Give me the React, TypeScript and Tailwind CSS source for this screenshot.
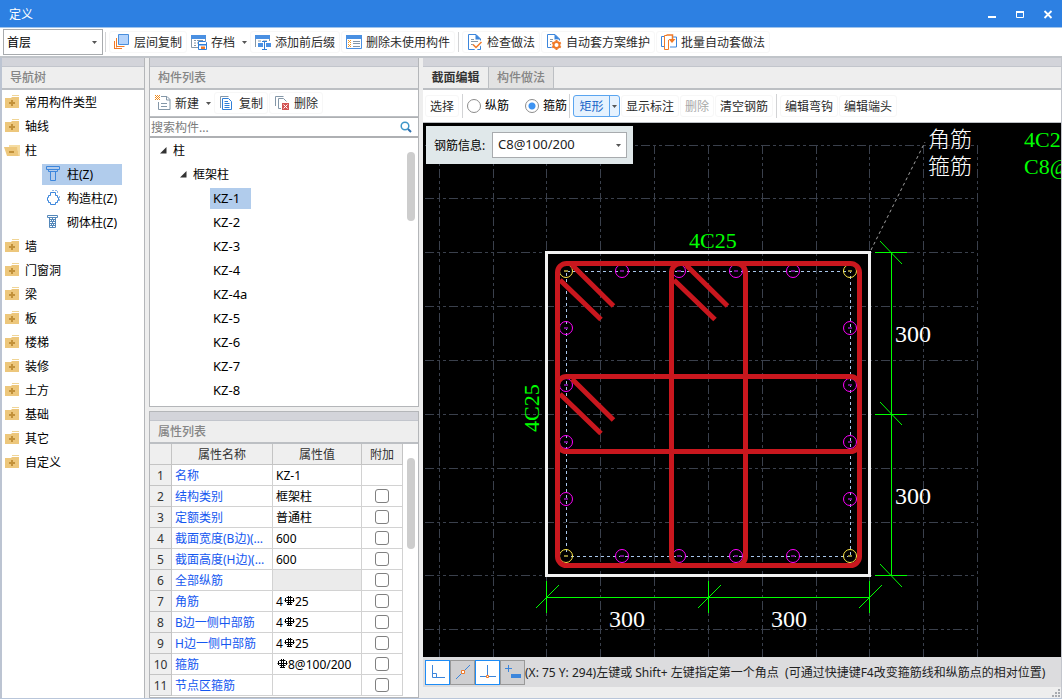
import { ReactNode } from "react";
import clsx from "clsx";

const SANS = "font-['Noto_Sans','Noto_Sans_CJK_SC',sans-serif]";

type IconProps = { children: ReactNode; className?: string };

function Icon({ children, className }: IconProps) {
  return (
    <svg width="16" height="16" viewBox="0 0 16 16" fill="none" aria-hidden="true" className={clsx("shrink-0", className)}>
      {children}
    </svg>
  );
}

function Caret({ className }: { className?: string }) {
  return (
    <svg width="5" height="3" viewBox="0 0 5 3" aria-hidden="true" className={clsx("shrink-0", className)}>
      <path d="M0 0h5L2.5 3z" fill="#555" />
    </svg>
  );
}

/* ---------- icons ---------- */

const CopyLayerIcon = () => (
  <Icon>
    <path d="M4.500.5h10v10h-10z" fill="#b4d3fb" stroke="#4a8fdc" />
    <path d="M2.500 4v9.500" stroke="#f07a28" />
    <path d="M2.500 12.500h8" stroke="#f07a28" />
    <path d="M.5 7v8" stroke="#f07a28" />
    <path d="M0 14.500h8" stroke="#f07a28" />
  </Icon>
);

const ArchiveIcon = () => (
  <Icon>
    <path d="M.5 1v12.500H7M14.500 5v2" stroke="#8497a8" />
    <path d="M0 1h15v4H0z" fill="#4a90e2" />
    <path d="M3 6.500h2M6 6.500h6M3 9h2M6 9h2M3 11.500h2" stroke="#8497a8" />
    <path d="M7.500 7.500h7l1 1v7h-8z" fill="#fff" stroke="#2f7fd8" />
    <path d="M8 10h7v1.500H8z" fill="#2f7fd8" />
    <path d="M10 12.500h4V15h-4z" fill="#f07a28" />
  </Icon>
);

const PrefixIcon = () => (
  <Icon>
    <path d="M.5 1v12M14.500 1v6" stroke="#8497a8" />
    <path d="M0 1h15v4H0z" fill="#4a90e2" />
    <path d="M3 7h3M8 7h4M3 9.500h2" stroke="#8497a8" />
    <path d="M3 9h5v4H3zM11 9h5v4h-5z" fill="#4a90e2" />
    <path d="M7 7.500h5M9.500 7.500v8M7 15.500h5" stroke="#2f7fd8" />
  </Icon>
);

const UnusedIcon = () => (
  <Icon>
    <path d="M.5 2.500h15v12H.5z" stroke="#4a90e2" fill="#fff" />
    <path d="M0 1h16v4H0z" fill="#4a90e2" />
    <path d="M7 7.500h7M7 9.500h7M7 12.500h7" stroke="#8497a8" />
    <path d="M2 6h1v1H2zM4 6h1v1H4zM3 7h1v1H3zM2 8h1v1H2zM4 8h1v1H4zM2 10h1v1H2zM4 10h1v1H4zM3 11h1v1H3zM2 12h1v1H2zM4 12h1v1H4z" fill="#f39a28" />
  </Icon>
);

const CheckDocIcon = () => (
  <Icon>
    <path d="M9 .5H1.500v15h12V5z" fill="#fff" stroke="#3c86dc" />
    <path d="M8.500 0 14 5.500H8.500z" fill="#3c86dc" />
    <path d="M4 5.500h3M4 7.500h7M4 10.500h3" stroke="#8497a8" />
    <path d="M6 10.500 9 14l6-6.500" stroke="#fff" strokeWidth="4" />
    <path d="m6 10.500 3 3 5.500-5.500" stroke="#f07a28" strokeWidth="1.500" />
  </Icon>
);

const GearDocIcon = () => (
  <Icon>
    <path d="M9 .5H1.500v13h12V5z" fill="#fff" stroke="#3c86dc" />
    <path d="M8.500 0 14 5.500H8.500z" fill="#3c86dc" />
    <path d="M4 5.500h3M4 7.500h4M4 10.500h3" stroke="#8497a8" />
    <circle cx="10.500" cy="11" r="5.500" fill="#fff" />
    <circle cx="10.500" cy="11" r="3" stroke="#f07a28" strokeWidth="2" />
    <path d="M10.500 6v1.500M10.500 14.500V16M6.200 8.500l1.400.8M13.400 12.700l1.400.8M6.200 13.500l1.400-.8M13.400 9.300l1.400-.8" stroke="#f07a28" strokeWidth="2" />
  </Icon>
);

const BatchIcon = () => (
  <Icon>
    <path d="M3 2.500H.5v10H3M12 3h3.500v10H9" stroke="#3c86dc" />
    <path d="M6 1.500H3.500v14H7.500V6" stroke="#f07a28" />
    <path d="M5.500 1h6v5" stroke="#f07a28" strokeWidth="1.500" />
    <path d="M7.500 5h7L11 9z" fill="#f07a28" />
  </Icon>
);

const NewIcon = () => (
  <Icon>
    <path d="M6 1.500h6l3 3v10H3.500V7" stroke="#8497a8" />
    <path d="M11.500 1.500V5H15M6 8.500h6M6 11.500h6" stroke="#8497a8" />
    <path d="M0 0h1v1H0zM2 0h1v1H2zM4 0h1v1H4zM1 1h1v1H1zM3 1h1v1H3zM0 2h1v1H0zM2 2h1v1H2zM4 2h1v1H4zM1 3h1v1H1zM3 3h1v1H3zM0 4h1v1H0zM2 4h1v1H2zM4 4h1v1H4z" fill="#f08a1c" />
  </Icon>
);

const CopyIcon = () => (
  <Icon>
    <path d="M1.500 13V1.500h8" stroke="#8497a8" />
    <path d="M3.500 3.500h6l3 3v8h-9z" stroke="#2f7fd8" />
    <path d="M5.500 6.500H9M5.500 8.500h5M5.500 10.500h5M5.500 12.500h5" stroke="#2f7fd8" />
  </Icon>
);

const DeleteIcon = () => (
  <Icon>
    <path d="M1.500 11V1.500h8M7 13.500H4.500v-10h5l3 3" stroke="#8497a8" />
    <path d="M8 8h7v7H8z" fill="#d35454" />
    <path d="m9.500 9.500 4 4m0-4-4 4" stroke="#fff" />
  </Icon>
);

const FolderIcon = () => (
  <Icon>
    <path d="M8 1h7v1H8z" fill="#f0d596" />
    <path d="M1 4h6l1-1h7v11H1z" fill="#edc77c" />
    <path d="M5 9h6M8 6v6" stroke="#c2913a" strokeWidth="2" />
  </Icon>
);

const FolderOpenIcon = () => (
  <Icon>
    <path d="M5 3h11v11h-1l-2-8H5z" fill="#f5dca2" />
    <path d="M0 5h13l2 9H3z" fill="#edc77c" />
    <path d="M5 10h5" stroke="#c2913a" strokeWidth="2" />
  </Icon>
);

const ColumnIcon = () => (
  <Icon>
    <path d="M1.500.5h13v3h-13zM3.500 3.500h9v2h-9zM5.500 5.500h5v9h-5z" stroke="#3c86dc" fill="#b3ccec" />
  </Icon>
);

const StructColumnIcon = () => (
  <Icon>
    <path d="M5.500 2.500h5v3h2v2h1v3h-1v2h-2v2h-5v-2h-2v-2h-1v-3h1v-2h2z" stroke="#3c86dc" />
    <path d="M7 .5h5.500V4M14.500 6v5" stroke="#8fb8e8" strokeDasharray="2 1" />
  </Icon>
);

const BrickColumnIcon = () => (
  <Icon>
    <path d="M2.500 1.500h10v2h-10zM4.500 3.500h6v10h-6z" stroke="#5387ba" fill="#fff" />
    <path d="M4 5.500h7M4 7.500h7M4 9.500h7M4 11.500h7M7.500 3.500v2M6.500 5.500v2M8.500 5.500v2M7.500 7.500v2M6.500 9.500v2M8.500 9.500v2M7.500 11.500v2" stroke="#5387ba" />
  </Icon>
);

// HRB400 bar grade mark
function RebarMark() {
  return (
    <svg width="12" height="9" viewBox="0 0 12 9" fill="none" role="img" aria-label="C" className="mb-1 shrink-0">
      <path d="M3.500 1.500h6M3.500 6.500h6M2.500 2v4M10.500 2v4" stroke="#000" />
      <path d="M1.500 4.500h10M5.500 0v9M7.500 0v9M4 8.500h5" stroke="#000" />
    </svg>
  );
}

/* ---------- shared bits ---------- */

type ToolButtonProps = { label: string; icon?: ReactNode; caret?: boolean; disabled?: boolean };

function ToolButton({ label, icon, caret, disabled }: ToolButtonProps) {
  return (
    <button
      type="button"
      disabled={disabled}
      className={clsx(
        "flex h-[22px] shrink-0 items-center gap-1 rounded-[3px] border",
        caret ? "border-transparent pl-[2px] pr-px" : "border-[#f7f7f7] px-1",
        disabled ? "text-[#a8a8a8]" : "text-[#2b2b2b]"
      )}
    >
      {icon}
      <span className="pt-0.5">{label}</span>
      {caret && <Caret className="ml-[3px]" />}
    </button>
  );
}

function Separator({ className }: { className?: string }) {
  return <div className={clsx("w-px shrink-0 bg-[#d2d3d5]", className)} />;
}

function PanelHeader({ title }: { title: string }) {
  return (
    <>
      <div className="h-[9px] shrink-0 border-b border-[#c2c5cc] bg-[#d3d4da]" />
      <h2 className="h-[23px] shrink-0 border-b-2 border-[#bcbfc3] bg-[#eee] pl-2 font-medium leading-[21px] text-[#858585]">
        {title}
      </h2>
    </>
  );
}

/* ---------- navigation tree ---------- */

const navTop = ["常用构件类型", "轴线"];
const navBottom = ["墙", "门窗洞", "梁", "板", "楼梯", "装修", "土方", "基础", "其它", "自定义"];
const columnTypes = [
  { label: "柱(Z)", icon: <ColumnIcon />, active: true },
  { label: "构造柱(Z)", icon: <StructColumnIcon /> },
  { label: "砌体柱(Z)", icon: <BrickColumnIcon /> },
];

function NavFolder({ label, open }: { label: string; open?: boolean }) {
  return (
    <li className="flex h-6 items-center gap-[5px] pl-[2px]">
      {open ? <FolderOpenIcon /> : <FolderIcon />}
      <span className="pt-0.5">{label}</span>
    </li>
  );
}

function NavTree() {
  return (
    <aside className="flex w-[143px] shrink-0 flex-col border-r border-[#b4b6b9] bg-white">
      <PanelHeader title="导航树" />
      <ul className="min-h-0 flex-1 overflow-hidden">
        {navTop.map((n) => <NavFolder key={n} label={n} />)}
        <NavFolder label="柱" open />
        {columnTypes.map((c) => (
          <li key={c.label} className="flex h-6 items-center pl-10">
            <span className={clsx("flex h-[21px] w-20 items-center gap-[6px] whitespace-nowrap pl-[3px]", c.active && "bg-[#b1ccec]")}>
              {c.icon}
              <span className="pt-0.5">{c.label}</span>
            </span>
          </li>
        ))}
        {navBottom.map((n) => <NavFolder key={n} label={n} />)}
      </ul>
    </aside>
  );
}

/* ---------- component list ---------- */

const components = ["KZ-1", "KZ-2", "KZ-3", "KZ-4", "KZ-4a", "KZ-5", "KZ-6", "KZ-7", "KZ-8"];

function Twisty() {
  return (
    <svg width="7" height="7" viewBox="0 0 7 7" aria-hidden="true">
      <path d="M6.500 0v6.500H0z" fill="#333" />
    </svg>
  );
}

function ComponentList() {
  return (
    <section className="flex h-[349px] shrink-0 flex-col border-x border-b border-[#b4b6b9] bg-white">
      <PanelHeader title="构件列表" />
      <div className="flex h-[27px] shrink-0 items-center gap-px border-b border-[#bcbfc3] pl-[2px]">
        <ToolButton label="新建" icon={<NewIcon />} caret />
        <ToolButton label="复制" icon={<CopyIcon />} />
        <ToolButton label="删除" icon={<DeleteIcon />} />
      </div>
      <div className="flex h-[21px] shrink-0 items-center border-b-2 border-t border-[#aeb0b3] pr-[6px]">
        <input
          aria-label="搜索构件"
          placeholder="搜索构件..."
          className="min-w-0 flex-1 bg-transparent pl-px pt-0.5 outline-none placeholder:text-[#7b7b7b]"
        />
        <svg width="12" height="12" viewBox="0 0 12 12" fill="none" aria-hidden="true">
          <circle cx="5" cy="5" r="3.800" stroke="#3d96c8" strokeWidth="1.500" />
          <path d="m8 8 3 3" stroke="#2f6fae" strokeWidth="2" />
        </svg>
      </div>
      <div className="flex min-h-0 flex-1">
        <ul className="flex-1">
          <li className="flex h-6 items-center gap-[6px] pl-[10px]">
            <Twisty />
            <span className="pt-0.5">柱</span>
          </li>
          <li className="flex h-6 items-center gap-[6px] pl-[30px]">
            <Twisty />
            <span className="pt-0.5">框架柱</span>
          </li>
          {components.map((c, i) => (
            <li key={c} className="flex h-6 items-center pl-[60px] text-[13px]">
              <span className={clsx("h-[21px] px-[3px] leading-[21px]", i === 0 && "w-[41px] bg-[#b1ccec]")}>{c}</span>
            </li>
          ))}
        </ul>
        <div className="mr-[3px] mt-[14px] h-[69px] w-2 rounded-full bg-[#cdcdcd]" />
      </div>
    </section>
  );
}

/* ---------- property list ---------- */

type Property = { name: string; value?: ReactNode; check?: boolean; locked?: boolean };

const bars = (before: string, after: string) => (
  <span className="flex items-center">
    {before}
    <RebarMark />
    {after}
  </span>
);

const properties: Property[] = [
  { name: "名称", value: "KZ-1", check: false },
  { name: "结构类别", value: "框架柱" },
  { name: "定额类别", value: "普通柱" },
  { name: "截面宽度(B边)(mm)", value: "600" },
  { name: "截面高度(H边)(mm)", value: "600" },
  { name: "全部纵筋", locked: true },
  { name: "角筋", value: bars("4", "25") },
  { name: "B边一侧中部筋", value: bars("4", "25") },
  { name: "H边一侧中部筋", value: bars("4", "25") },
  { name: "箍筋", value: bars("", "8@100/200") },
  { name: "节点区箍筋" },
];

function PropertyList() {
  return (
    <section className="mt-1 flex min-h-0 flex-1 flex-col overflow-hidden border border-[#b4b6b9] bg-white">
      <PanelHeader title="属性列表" />
      <div className="flex min-h-0 flex-1 overflow-hidden">
        <div className="flex-1">
          <table className="w-full table-fixed border-separate border-spacing-0">
            <colgroup>
              <col className="w-[22px]" />
              <col className="w-[101px]" />
              <col />
              <col className="w-[41px]" />
            </colgroup>
            <thead>
              <tr className="h-[21px] bg-[#efefef] leading-[18px] text-[#333]">
                <th className="border-b border-r border-[#c4c4c4]" />
                {["属性名称", "属性值", "附加"].map((h) => (
                  <th key={h} scope="col" className="border-b border-r border-[#c4c4c4] px-0 pb-0 pt-0.5 font-normal">{h}</th>
                ))}
              </tr>
            </thead>
            <tbody>
              {properties.map((p, i) => (
                <tr key={p.name} className="h-[21px] leading-[18px]">
                  <th scope="row" className="border-b border-r border-[#c4c4c4] bg-[#efefef] px-0 pb-0 pt-0.5 font-normal text-[#333]">
                    {i + 1}
                  </th>
                  <td className="truncate border-b border-r border-[#d2d2d2] pb-0 pl-[3px] pr-1 pt-0.5 text-[#1457f0]">{p.name}</td>
                  <td className={clsx("whitespace-nowrap border-b border-r border-[#d2d2d2] pb-0 pl-[3px] pr-0 pt-0.5", p.locked && "bg-[#ebebeb]")}>
                    {p.value}
                  </td>
                  <td className="border-b border-r border-[#d2d2d2] p-0">
                    {p.check !== false && (
                      <input
                        type="checkbox"
                        aria-label={`附加 ${p.name}`}
                        className="mx-auto block size-[14px] appearance-none rounded-[3px] border border-[#808080] bg-white checked:bg-[#3c86dc]"
                      />
                    )}
                  </td>
                </tr>
              ))}
            </tbody>
          </table>
        </div>
        <div className="ml-1 mr-[3px] mt-[14px] h-[91px] w-2 rounded-full bg-[#cdcdcd]" />
      </div>
    </section>
  );
}

/* ---------- section drawing ---------- */

const gridX = [16, 70, 123, 177, 231, 285, 339, 393, 446, 500, 554];
const gridY = [22, 75, 129, 183, 237, 291, 345, 399, 452, 506];

const cornerBars = [[143, 148], [427, 148], [143, 433], [427, 433]];
const sideBars = [
  ...[199, 256, 313, 370].flatMap((x) => [[x, 148], [x, 433]]),
  ...[205, 262, 319, 376].flatMap((y) => [[143, y], [427, y]]),
];
// start point of each 135° hook pair
const hooks = [[137, 157], [251, 157], [137, 271]];

function SectionDrawing() {
  return (
    <svg className="absolute inset-0 size-full" role="img" aria-label="KZ-1 截面" fill="none">
      <g stroke="#3a404c" strokeDasharray="9 3 3 3 3 3" shapeRendering="crispEdges">
        {gridX.map((x) => <path key={x} d={`M${x + 0.5} 22V1200`} />)}
        {gridY.map((y) => <path key={y} d={`M2 ${y + 0.5}H554`} />)}
      </g>
      <path d="M448 127 502 19" stroke="#a0a0a0" strokeDasharray="3 3" />

      <rect x="143.500" y="148.500" width="284" height="285" stroke="#a9c8ec" strokeDasharray="3 3" shapeRendering="crispEdges" />
      {sideBars.map(([x, y]) => (
        <g key={`${x}-${y}`}>
          <circle cx={x} cy={y} r="6.500" stroke="#f0f" />
          <path d={`M${x - 2} ${y}h4`} stroke="#70108a" strokeWidth="2" />
        </g>
      ))}
      {cornerBars.map(([x, y]) => (
        <g key={`${x}-${y}`}>
          <circle cx={x} cy={y} r="6.500" stroke="#ffe94a" />
          <path d={`M${x - 2} ${y}h4`} stroke="#8d8434" strokeWidth="2" />
        </g>
      ))}
      <rect x="123.500" y="129.500" width="323" height="323" stroke="#f2f2f2" strokeWidth="3" shapeRendering="crispEdges" />

      <g stroke="#c9171e" strokeWidth="5">
        <rect x="134.500" y="140.500" width="302" height="302" rx="9" />
        <rect x="248.500" y="140.500" width="74" height="302" rx="9" />
        <rect x="134.500" y="253.500" width="302" height="75" rx="9" />
        {hooks.map(([x, y]) => (
          <path key={`${x}-${y}`} d={`M${x} ${y}l41 39.500M${x + 12} ${y - 15}l41.500 41`} />
        ))}
      </g>

      <g stroke="#00ff00">
        <path d="M468.500 129V453M452 129.500h32M452 291.500h32M452 452.500h32" />
        <path d="m457 118 22 23M457 279l22 23M457 441l22 23" />
        <path d="M123 474.500H447M123.500 458v32M285.500 458v32M446.500 458v32" />
        <path d="m113 485 23-23M275 485l23-23M436 485l23-23" />
      </g>

      <g className="font-['Liberation_Serif',serif] text-[22px]" fill="#00ff00">
        <text x="266" y="125">4C25</text>
        <text x="116" y="309" transform="rotate(-90 116 309)">4C25</text>
        <text x="601" y="24">4C25</text>
        <text x="601" y="51">C8@100/200</text>
      </g>
      <g className="font-['Liberation_Serif',serif] text-2xl" fill="#fff">
        <text x="472" y="219">300</text>
        <text x="472" y="381">300</text>
        <text x="186" y="504">300</text>
        <text x="348" y="504">300</text>
      </g>
      <g className="font-['Noto_Sans_CJK_SC',sans-serif] text-[22px] font-light" fill="#fff">
        <text x="505" y="24">角筋</text>
        <text x="505" y="51">箍筋</text>
      </g>
    </svg>
  );
}

function StirrupInfo() {
  return (
    <div className="absolute left-[3px] top-[3px] flex h-[38px] w-[207px] items-center bg-[#e0e8ea] pl-2 pr-[6px]">
      <label htmlFor="stirrup" className="w-[58px] whitespace-nowrap pt-0.5">钢筋信息:</label>
      <div className="relative flex-1">
        <select id="stirrup" className="block h-[26px] w-full appearance-none border border-[#a8abae] bg-white pl-[5px] text-[13px] text-[#222]">
          <option>C8@100/200</option>
        </select>
        <Caret className="pointer-events-none absolute right-[6px] top-[12px]" />
      </div>
    </div>
  );
}

function StatusBar() {
  const box = "flex h-[25px] w-[25px] shrink-0 items-center justify-center border";
  const on = "border-[#1e8cf5] bg-white";
  const off = "border-[#999] bg-[#cfcfd1]";
  return (
    <footer className="flex h-[30px] shrink-0 items-center overflow-hidden bg-[#dcdcde] pl-[2px]">
      <button type="button" aria-label="正交" className={clsx(box, on)}>
        <Icon><path d="M2.500 1v12.500H15M2.500 9.500h4v4" stroke="#3c86dc" /></Icon>
      </button>
      <button type="button" aria-label="中点" className={clsx(box, off)}>
        <Icon>
          <path d="m1 15 14-14" stroke="#3c86dc" />
          <path d="M6.500 6.500h3v3h-3z" fill="#fff" stroke="#f07a28" />
        </Icon>
      </button>
      <button type="button" aria-label="垂点" className={clsx(box, on)}>
        <Icon>
          <path d="M7.500 1v12M0 12.500h16" stroke="#3c86dc" />
          <path d="M6.500 11.500h2v2h-2z" fill="#fff" stroke="#f07a28" />
        </Icon>
      </button>
      <button type="button" aria-label="动态输入" className={clsx(box, off)}>
        <Icon>
          <path d="M0 4.500h7M3.500 1v7" stroke="#3c86dc" />
          <path d="M6 10h10v4H6z" fill="#3c86dc" />
        </Icon>
      </button>
      <span className="whitespace-pre pt-0.5 text-[#222]">
        (X: 75 Y: 294)左键或 Shift+ 左键指定第一个角点  (可通过快捷键F4改变箍筋线和纵筋点的相对位置)
      </span>
    </footer>
  );
}

function Radio({ label, defaultChecked }: { label: string; defaultChecked?: boolean }) {
  return (
    <label className="flex shrink-0 items-center gap-1">
      <input
        type="radio"
        name="barKind"
        defaultChecked={defaultChecked}
        className="size-[14px] appearance-none rounded-full border border-[#8c8c8c] bg-white checked:bg-[radial-gradient(circle,#3d93f2_3px,#fff_4px)]"
      />
      <span>{label}</span>
    </label>
  );
}

function SectionEditor() {
  return (
    <main className="flex min-w-0 flex-1 flex-col border-r border-[#c2c5cc]">
      <div className="h-[9px] shrink-0 border-b border-[#c2c5cc] bg-[#d3d4da]" />
      <div role="tablist" className="flex h-[23px] shrink-0 border-b-2 border-[#bcbfc3] bg-[#eee]">
        <button type="button" role="tab" aria-selected="true" className="w-[66px] border-r border-[#bcbfc3] font-bold text-[#333]">
          截面编辑
        </button>
        <button type="button" role="tab" aria-selected="false" className="w-[65px] border-r border-[#bcbfc3] bg-[#e2e2e2] font-medium text-[#858585]">
          构件做法
        </button>
      </div>
      <div className="flex h-[33px] shrink-0 items-center gap-px overflow-hidden border-b border-[#bcbfc3] bg-white pl-[2px]">
        <ToolButton label="选择" />
        <Separator className="ml-[2px] mr-[3px] h-6" />
        <Radio label="纵筋" />
        <div className="w-[14px]" />
        <Radio label="箍筋" defaultChecked />
        <Separator className="ml-px mr-[2px] h-6" />
        <div className="flex h-[22px] w-[47px] shrink-0 rounded-[3px] border border-[#5aa5f0] bg-[#e6f2fe] text-[#1565c8]">
          <button type="button" className="flex-1 border-r border-[#5aa5f0] pt-0.5">矩形</button>
          <button type="button" aria-label="更多形状" className="flex w-[9px] items-center justify-center">
            <Caret />
          </button>
        </div>
        <ToolButton label="显示标注" />
        <ToolButton label="删除" disabled />
        <ToolButton label="清空钢筋" />
        <Separator className="mx-[2px] h-6" />
        <ToolButton label="编辑弯钩" />
        <ToolButton label="编辑端头" />
      </div>
      <div className="relative min-h-0 flex-1 overflow-hidden bg-black">
        <SectionDrawing />
        <StirrupInfo />
      </div>
      <StatusBar />
      <div className="flex h-[11px] shrink-0 items-end justify-end">
        <svg width="9" height="9" viewBox="0 0 9 9" aria-hidden="true">
          <path d="M6 0h2v2H6zM3 3h2v2H3zM6 3h2v2H6zM0 6h2v2H0zM3 6h2v2H3zM6 6h2v2H6z" fill="#a8abb0" />
        </svg>
      </div>
    </main>
  );
}

/* ---------- window ---------- */

function TitleBar() {
  return (
    <header className="flex h-7 shrink-0 items-center justify-between border-b border-[#9fc4ec] bg-[#2d80e2] pl-[9px] pr-2 text-white">
      <h1 className="pt-0.5">定义</h1>
      <div className="flex gap-4">
        <button type="button" aria-label="最小化">
          <svg width="12" height="12" viewBox="0 0 12 12" fill="none"><path d="M2 9h8" stroke="#fff" strokeWidth="2" /></svg>
        </button>
        <button type="button" aria-label="最大化">
          <svg width="12" height="12" viewBox="0 0 12 12" fill="none">
            <path d="M2.500 3.500h7v6h-7z" stroke="#fff" />
            <path d="M2 4h8" stroke="#fff" strokeWidth="2" />
          </svg>
        </button>
        <button type="button" aria-label="关闭">
          <svg width="12" height="12" viewBox="0 0 12 12" fill="none"><path d="m2.500 3 7 7m0-7-7 7" stroke="#fff" strokeWidth="1.800" /></svg>
        </button>
      </div>
    </header>
  );
}

function MainToolbar() {
  return (
    <div className="flex h-[30px] shrink-0 items-center gap-px overflow-hidden border-b-2 border-[#c0c4c9] bg-white pl-[3px]">
      <div className="relative w-[100px] shrink-0">
        <select aria-label="楼层" className="block h-[26px] w-full appearance-none border border-[#a8abae] bg-white pl-[3px] pt-0.5">
          <option>首层</option>
        </select>
        <Caret className="pointer-events-none absolute right-[6px] top-[12px]" />
      </div>
      <Separator className="ml-px mr-[2px] h-5" />
      <ToolButton label="层间复制" icon={<CopyLayerIcon />} />
      <ToolButton label="存档" icon={<ArchiveIcon />} caret />
      <ToolButton label="添加前后缀" icon={<PrefixIcon />} />
      <ToolButton label="删除未使用构件" icon={<UnusedIcon />} />
      <Separator className="mx-[2px] h-5" />
      <ToolButton label="检查做法" icon={<CheckDocIcon />} />
      <ToolButton label="自动套方案维护" icon={<GearDocIcon />} />
      <ToolButton label="批量自动套做法" icon={<BatchIcon />} />
    </div>
  );
}

export default function App() {
  return (
    <div className={clsx("flex h-screen flex-col overflow-hidden border-b border-[#b9c6da] bg-[#eee] text-xs text-black", SANS)}>
      <TitleBar />
      <MainToolbar />
      <div className="flex min-h-0 flex-1 gap-1 border-l-2 border-[#bcc4d2]">
        <NavTree />
        <div className="flex w-[270px] shrink-0 flex-col">
          <ComponentList />
          <PropertyList />
        </div>
        <SectionEditor />
      </div>
    </div>
  );
}
